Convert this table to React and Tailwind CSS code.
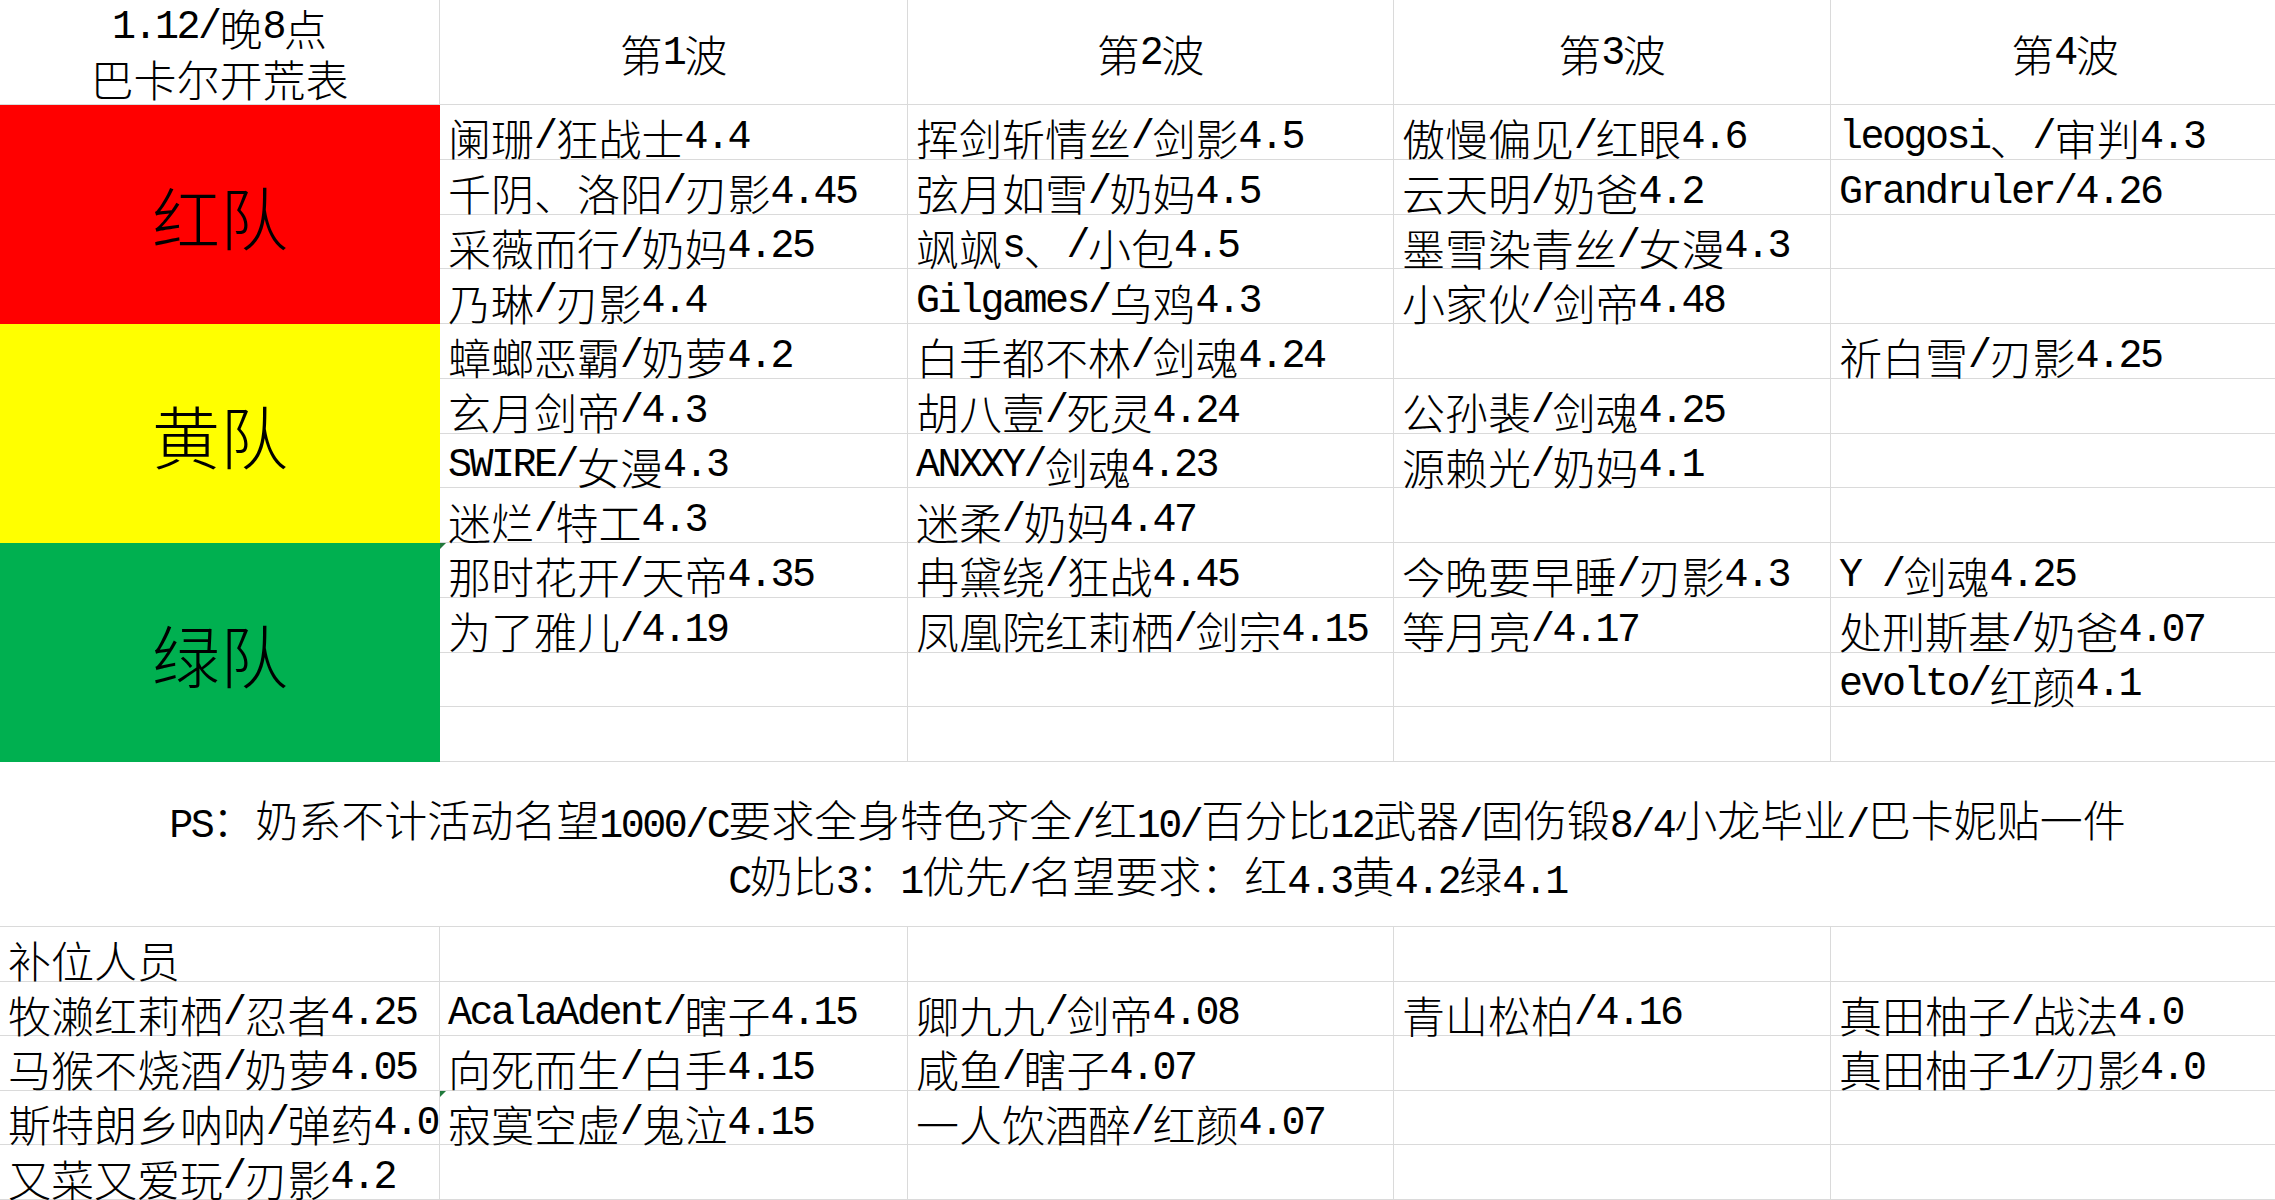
import React from "react";

const ASCII = /^[\x20-\x7E]+$/;

function T({ s }) {
  const parts = s.split(/([\x20-\x7E]+)/).filter((p) => p !== "");
  return (
    <>
      {parts.map((p, i) =>
        ASCII.test(p) ? (
          <span
            key={i}
            className="font-['Liberation_Mono','Noto_Sans_CJK_SC',monospace] text-[40px] leading-none tracking-[-2.5px]"
          >
            {p}
          </span>
        ) : (
          <span key={i}>{p}</span>
        )
      )}
    </>
  );
}

const top = [
  ["阑珊/狂战士4.4", "挥剑斩情丝/剑影4.5", "傲慢偏见/红眼4.6", "leogosi、/审判4.3"],
  ["千阴、洛阳/刃影4.45", "弦月如雪/奶妈4.5", "云天明/奶爸4.2", "Grandruler/4.26"],
  ["采薇而行/奶妈4.25", "飒飒s、/小包4.5", "墨雪染青丝/女漫4.3", ""],
  ["乃琳/刃影4.4", "Gilgames/乌鸡4.3", "小家伙/剑帝4.48", ""],
  ["蟑螂恶霸/奶萝4.2", "白手都不林/剑魂4.24", "", "祈白雪/刃影4.25"],
  ["玄月剑帝/4.3", "胡八壹/死灵4.24", "公孙裴/剑魂4.25", ""],
  ["SWIRE/女漫4.3", "ANXXY/剑魂4.23", "源赖光/奶妈4.1", ""],
  ["迷烂/特工4.3", "迷柔/奶妈4.47", "", ""],
  ["那时花开/天帝4.35", "冉黛绕/狂战4.45", "今晚要早睡/刃影4.3", "Y /剑魂4.25"],
  ["为了雅儿/4.19", "凤凰院红莉栖/剑宗4.15", "等月亮/4.17", "处刑斯基/奶爸4.07"],
  ["", "", "", "evolto/红颜4.1"],
  ["", "", "", ""],
];

const bottom = [
  ["补位人员", "", "", "", ""],
  ["牧濑红莉栖/忍者4.25", "AcalaAdent/瞎子4.15", "卿九九/剑帝4.08", "青山松柏/4.16", "真田柚子/战法4.0"],
  ["马猴不烧酒/奶萝4.05", "向死而生/白手4.15", "咸鱼/瞎子4.07", "", "真田柚子1/刃影4.0"],
  ["斯特朗乡呐呐/弹药4.0", "寂寞空虚/鬼泣4.15", "一人饮酒醉/红颜4.07", "", ""],
  ["又菜又爱玩/刃影4.2", "", "", "", ""],
];

function Marker() {
  return (
    <span className="absolute left-0 top-0 h-0 w-0 border-t-[6px] border-r-[6px] border-t-[#217a3c] border-r-transparent" />
  );
}

function Cell({ text, last, marker }) {
  return (
    <div
      className={
        last
          ? "relative flex items-center border-b border-[#dadada] pl-2 pt-[12px] whitespace-nowrap leading-none"
          : "relative flex items-center border-b border-r border-[#dadada] pl-2 pt-[12px] whitespace-nowrap leading-none"
      }
    >
      {marker && <Marker />}
      {text ? <T s={text} /> : null}
    </div>
  );
}

function Team({ label, color }) {
  return (
    <div className={"flex h-[219px] items-center justify-center pt-[2px] text-[68px] leading-none " + color}>
      {label}
    </div>
  );
}

export default function App() {
  return (
    <div className="h-[1200px] w-[2275px] overflow-hidden bg-white font-['Noto_Sans_CJK_SC',sans-serif] text-[43px] font-light text-black">
      {/* top table */}
      <div className="flex">
        <div className="flex w-[440px] flex-col">
          <div className="flex h-[105px] flex-col items-center border-b border-r border-[#dadada] pt-[2px]">
            <div className="flex h-[51px] items-center justify-center whitespace-nowrap leading-none">
              <T s="1.12/晚8点" />
            </div>
            <div className="flex h-[51px] items-center justify-center whitespace-nowrap leading-none">
              巴卡尔开荒表
            </div>
          </div>
          <Team label="红队" color="bg-[#ff0000]" />
          <Team label="黄队" color="bg-[#ffff00]" />
          <Team label="绿队" color="bg-[#00b050]" />
        </div>
        <div className="grid grid-cols-[468px_486px_437px_444px] grid-rows-[105px_repeat(12,54.75px)]">
          {["第1波", "第2波", "第3波", "第4波"].map((h, i) => (
            <div
              key={h}
              className={
                i === 3
                  ? "flex items-center justify-center border-b border-[#dadada] pl-[24px] pt-[3px] leading-none"
                  : "flex items-center justify-center border-b border-r border-[#dadada] pt-[3px] leading-none"
              }
            >
              <T s={h} />
            </div>
          ))}
          {top.map((row, r) =>
            row.map((c, ci) => (
              <Cell key={r + "-" + ci} text={c} last={ci === 3} marker={r === 8 && ci === 0} />
            ))
          )}
        </div>
      </div>

      {/* notes */}
      <div className="flex h-[164px] flex-col items-center justify-center pl-[20px] pt-[5px] leading-[55px]">
        <div className="whitespace-nowrap">
          <T s="PS：奶系不计活动名望1000/C要求全身特色齐全/红10/百分比12武器/固伤锻8/4小龙毕业/巴卡妮贴一件" />
        </div>
        <div className="whitespace-nowrap">
          <T s="C奶比3：1优先/名望要求：红4.3黄4.2绿4.1" />
        </div>
      </div>

      {/* substitutes */}
      <div className="grid grid-cols-[440px_468px_486px_437px_444px] auto-rows-[54.6px] border-t border-[#dadada]">
        {bottom.map((row, r) =>
          row.map((c, ci) => (
            <Cell key={r + "-" + ci} text={c} last={ci === 4} marker={r === 3 && ci === 1} />
          ))
        )}
      </div>
    </div>
  );
}
